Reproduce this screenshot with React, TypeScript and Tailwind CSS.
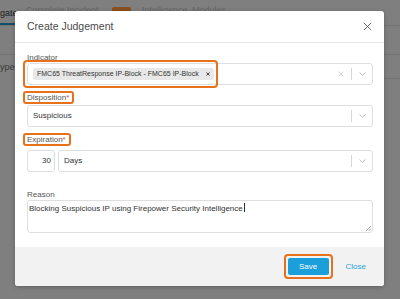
import { ReactNode } from "react";

const font = { fontFamily: '"Liberation Sans", Arial, Helvetica, sans-serif' };

function Chevron() {
  return (
    <svg width="7" height="4" viewBox="0 0 7 4" fill="none">
      <path d="M0.5 0.5 L3.5 3.3 L6.5 0.5" stroke="#b8b8b8" strokeWidth="0.9" />
    </svg>
  );
}

function Cross({ size = 6, color = "#b8b8b8", w = 1 }: { size?: number; color?: string; w?: number }) {
  return (
    <svg width={size} height={size} viewBox="0 0 10 10" fill="none">
      <path d="M1 1 L9 9 M9 1 L1 9" stroke={color} strokeWidth={w} />
    </svg>
  );
}

function SelectBox({ children, clear }: { children: ReactNode; clear?: boolean }) {
  return (
    <div className="relative flex h-[22px] flex-1 items-center rounded-[3px] border border-[#dedede] bg-white">
      <div className="flex min-w-0 flex-1 items-center pl-[5px]">{children}</div>
      {clear && (
        <div className="mr-[7px] flex items-center">
          <Cross size={6} color="#c4c4c4" w={1.2} />
        </div>
      )}
      <div className="h-[12px] w-px bg-[#d6d6d6]" />
      <div className="flex w-[20px] items-center justify-center">
        <Chevron />
      </div>
    </div>
  );
}

function Label({ children, mark }: { children: ReactNode; mark?: boolean }) {
  if (!mark) return <div className="h-[11px] text-[8px] leading-[11px] text-[#555]">{children}</div>;
  return (
    <div className="flex">
      <span className="-ml-[4px] inline-flex h-[13px] items-center rounded-[3px] border-2 border-[#e8711c] pl-[2px] pr-[3px] text-[8px] leading-none text-[#555]">
        {children}
        <span className="text-[#e04a4a]">*</span>
      </span>
    </div>
  );
}

export default function App() {
  return (
    <div className="relative h-[299px] w-[400px] overflow-hidden bg-[#7f7f7f]" style={font}>
      {/* page behind the overlay */}
      <div className="absolute left-0 top-0 h-[26px] w-[400px] border-b border-[#737373]">
        <span className="absolute left-0 top-[8px] text-[9px] leading-[10px] text-[#1c1c1c]">gate</span>
        <span className="absolute left-0 top-[23px] h-[2px] w-[15px] bg-[#11506d]" />
        <span className="absolute left-[26px] top-[5px] text-[9px] leading-[10px] text-[#676767]">Complete Incident</span>
        <span className="absolute left-[112px] top-[7px] h-[8px] w-[19px] rounded-[2px] bg-[#8c4f1e]" />
        <span className="absolute left-[142px] top-[5px] text-[9px] leading-[10px] text-[#676767]">Intelligence</span>
        <span className="absolute left-[192px] top-[5px] text-[9px] leading-[10px] text-[#676767]">Modules</span>
      </div>
      <div className="absolute left-0 top-[54px] h-px w-[15px] bg-[#737373]" />
      <span className="absolute left-0 top-[62px] text-[9px] leading-[10px] text-[#3a3a3a]">ypes</span>
      <div className="absolute right-0 top-[54px] h-px w-[16px] bg-[#737373]" />
      <div className="absolute right-0 top-[78px] h-px w-[16px] bg-[#737373]" />

      {/* dialog */}
      <div className="absolute left-[15px] top-[11px] flex h-[275px] w-[369px] flex-col overflow-hidden rounded-[3px] bg-white shadow-[0_1px_4px_rgba(0,0,0,0.25)]">
        <div className="flex h-[32px] shrink-0 items-center justify-between border-b border-[#e5e5e5] pl-[12px] pr-[12px]">
          <span className="text-[10.5px] text-[#4a4a4a]">Create Judgement</span>
          <Cross size={9} color="#555" w={1} />
        </div>

        <div className="flex flex-1 flex-col pl-[12px] pr-[11px] pt-[9px]">
          <Label>Indicator</Label>
          <div className="relative flex">
            <SelectBox clear>
              <span className="flex h-[12px] items-center gap-[7px] rounded-[2px] bg-[#e8e8e8] pl-[4px] pr-[4px] text-[7px] text-[#333]">
                FMC65 ThreatResponse IP-Block - FMC65 IP-Block
                <Cross size={4} color="#222" w={2} />
              </span>
            </SelectBox>
            <span className="pointer-events-none absolute left-[-4px] top-[-3px] h-[28px] w-[195px] rounded-[4px] border-2 border-[#e8711c]" />
          </div>

          <div className="mt-[6px]">
            <Label mark>Disposition</Label>
          </div>
          <div className="mt-[1px] flex">
            <SelectBox>
              <span className="text-[8px] text-[#333]">Suspicious</span>
            </SelectBox>
          </div>

          <div className="mt-[6px]">
            <Label mark>Expiration</Label>
          </div>
          <div className="mt-[4px] flex gap-[3px]">
            <div className="flex h-[22px] w-[28px] items-center justify-end rounded-[3px] border border-[#dedede] pr-[3px] text-[8px] text-[#333]">
              30
            </div>
            <SelectBox>
              <span className="text-[8px] text-[#333]">Days</span>
            </SelectBox>
          </div>

          <div className="mt-[17px]">
            <Label>Reason</Label>
          </div>
          <div className="relative h-[33px] rounded-[3px] border border-[#dedede] px-[1px] pt-[1px] text-[8px] leading-[10px] text-[#333]">
            Blocking Suspicious IP using Firepower Security Intelligence
            <span className="ml-[1px] inline-block h-[9px] w-px translate-y-[1px] bg-[#333]" />
            <svg className="absolute bottom-[1px] right-[1px]" width="5" height="5" viewBox="0 0 5 5">
              <path d="M5 0 L0 5 M5 2.5 L2.5 5" stroke="#999" strokeWidth="0.8" />
            </svg>
          </div>
        </div>

        <div className="flex h-[39px] shrink-0 items-center justify-end bg-[#f2f2f2] pr-[18px]">
          <div className="rounded-[4px] border-2 border-[#e8711c] p-[2px]">
            <div className="flex h-[17px] w-[41px] items-center justify-center rounded-[2px] bg-[#1a9fdb] text-[8px] text-white">
              Save
            </div>
          </div>
          <span className="ml-[13px] text-[8px] text-[#2aa3dc]">Close</span>
        </div>
      </div>
    </div>
  );
}
